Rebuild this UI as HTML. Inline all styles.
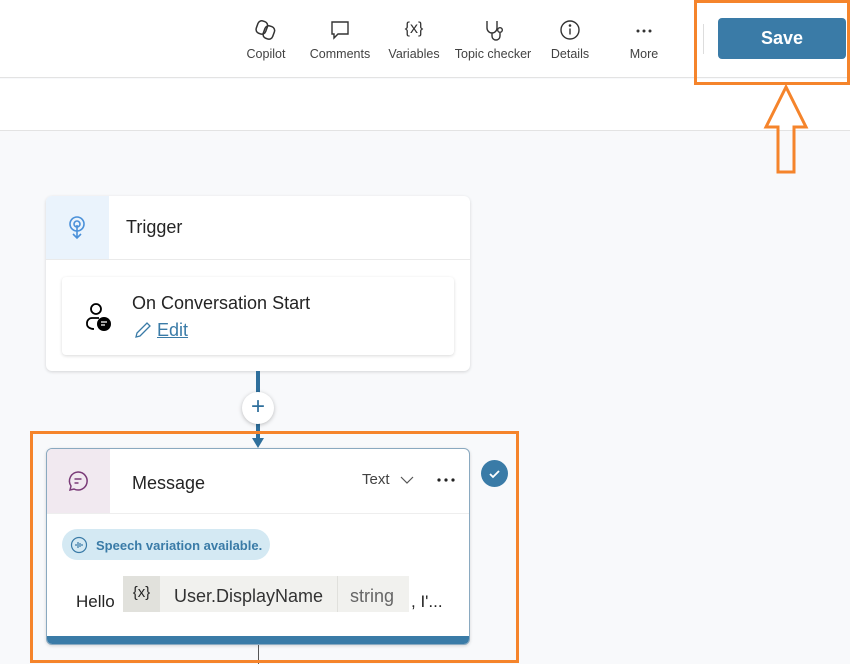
<!DOCTYPE html>
<html><head><style>
*{margin:0;padding:0;box-sizing:border-box}
body{width:850px;height:664px;overflow:hidden;background:#f8f9fb;font-family:"Liberation Sans",sans-serif;position:relative;color:#242424}
.abs{position:absolute}
.tb{left:0;top:0;width:850px;height:78px;background:#fff;border-bottom:1px solid #e3e3e3}
.band{left:0;top:79px;width:850px;height:52px;background:#fff;border-bottom:1px solid #e3e3e3}
.tool{top:18px;text-align:center;font-size:12.5px;color:#424242}
.tool svg{display:block;margin:0 auto 5px}
.card{background:#fff;border-radius:6px;box-shadow:0 1px 3px rgba(0,0,0,.15)}
</style></head><body>
<div class="abs tb"></div>
<div class="abs band"></div>

<div class="abs tool" style="left:240px;width:52px"><svg width="24" height="24" viewBox="0 0 24 24" fill="none" stroke="#333" stroke-width="1.5"><rect x="3" y="3" width="10" height="13" rx="4" transform="rotate(20 8 9)"/><rect x="10" y="8" width="10" height="13" rx="4" transform="rotate(20 15 14)"/></svg>Copilot</div>
<div class="abs tool" style="left:305px;width:70px"><svg width="24" height="24" viewBox="0 0 24 24" fill="none" stroke="#333" stroke-width="1.4"><path d="M4 4h16v12H10l-4 4v-4H4z"/></svg>Comments</div>
<div class="abs tool" style="left:385px;width:58px"><div style="font-size:16px;height:29px;line-height:22px;color:#333">{x}</div>Variables</div>
<div class="abs tool" style="left:450px;width:86px"><svg width="26" height="24" viewBox="0 0 26 24" fill="none" stroke="#333" stroke-width="1.4"><path d="M7 3v7a5 5 0 0 0 10 0V3M12 15v3a4 4 0 0 0 8 0v-3"/><circle cx="20" cy="12" r="2.3"/></svg>Topic checker</div>
<div class="abs tool" style="left:545px;width:50px"><svg width="24" height="24" viewBox="0 0 24 24" fill="none" stroke="#333" stroke-width="1.4"><circle cx="12" cy="12" r="9"/><path d="M12 10.5v6"/><circle cx="12" cy="7.5" r=".6" fill="#333"/></svg>Details</div>
<div class="abs tool" style="left:620px;width:48px"><div style="height:29px;padding-top:10px"><svg width="20" height="6" viewBox="0 0 20 6" style="margin:0 auto"><circle cx="4" cy="3" r="1.5" fill="#333"/><circle cx="10" cy="3" r="1.5" fill="#333"/><circle cx="16" cy="3" r="1.5" fill="#333"/></svg></div>More</div>
<div class="abs" style="left:703px;top:24px;width:1px;height:30px;background:#ddd"></div>

<div class="abs" style="left:718px;top:18px;width:128px;height:41px;background:#3a7ba7;border-radius:4px;color:#fff;font-weight:bold;font-size:18px;text-align:center;line-height:41px">Save</div>
<div class="abs" style="left:694px;top:0;width:156px;height:85px;border:3px solid #f5842b"></div>
<svg class="abs" style="left:760px;top:84px" width="52" height="92" viewBox="0 0 52 92"><path d="M26 3L6 43h12v45h16V43h12z" fill="none" stroke="#f5842b" stroke-width="3"/></svg>

<div class="abs card" style="left:46px;top:196px;width:424px;height:175px"></div>
<div class="abs" style="left:46px;top:196px;width:63px;height:63px;background:#eaf3fc;border-radius:6px 0 0 0"></div>
<svg class="abs" style="left:66px;top:215px" width="22" height="26" viewBox="0 0 22 26" fill="none" stroke="#4a90d9" stroke-width="1.6"><circle cx="11" cy="9" r="7"/><circle cx="11" cy="9" r="3"/><path d="M11 10v13M7 19l4 4 4-4"/></svg>
<div class="abs" style="left:46px;top:259px;width:424px;height:1px;background:#eaeaea"></div>
<div class="abs" style="left:126px;top:217px;font-size:18px">Trigger</div>
<div class="abs card" style="left:62px;top:277px;width:392px;height:78px;border-radius:4px"></div>
<svg class="abs" style="left:84px;top:301px" width="30" height="32" viewBox="0 0 30 32"><circle cx="12" cy="8" r="5" fill="none" stroke="#000" stroke-width="1.8"/><path d="M15 17H8a5 5 0 0 0-5 5v1c0 3 3 5 7 5" fill="none" stroke="#000" stroke-width="1.8"/><circle cx="20" cy="23" r="7" fill="#000"/><path d="M17 21h6M17 24h4" stroke="#fff" stroke-width="1.3"/></svg>
<div class="abs" style="left:132px;top:293px;font-size:18px">On Conversation Start</div>
<svg class="abs" style="left:133px;top:320px" width="20" height="20" viewBox="0 0 20 20" fill="none" stroke="#3a7ba7" stroke-width="1.3"><path d="M3 17l1-4L14 3l3 3L7 16z"/></svg>
<div class="abs" style="left:157px;top:320px;font-size:18px;color:#3a7ba7;text-decoration:underline">Edit</div>

<div class="abs" style="left:256px;top:371px;width:4px;height:72px;background:#2f6f9c"></div>
<div class="abs" style="left:242px;top:392px;width:32px;height:32px;border-radius:50%;background:#fff;box-shadow:0 1px 4px rgba(0,0,0,.25);text-align:center;line-height:30px;font-size:24px;color:#2f6f9c">+</div>
<svg class="abs" style="left:250px;top:436px" width="16" height="14"><path d="M2 2h12L8 12z" fill="#2f6f9c"/></svg>

<div class="abs card" style="left:46px;top:448px;width:424px;height:197px;border:1px solid #8aa9c0;overflow:hidden">
<div style="position:absolute;left:0;top:0;width:63px;height:64px;background:#f1e9f0"></div>
<div style="position:absolute;left:0;top:64px;width:424px;height:1px;background:#eee"></div>
<div style="position:absolute;left:0;bottom:0;width:424px;height:8px;background:#3a7ba7"></div>
</div>
<svg class="abs" style="left:66px;top:469px" width="24" height="24" viewBox="0 0 24 24" fill="none" stroke="#7a3b78" stroke-width="1.5"><path d="M12 3a9 9 0 1 1-4 17l-4 1 1-4A9 9 0 0 1 12 3z"/><path d="M8.5 10h7M8.5 14h4"/></svg>
<div class="abs" style="left:132px;top:473px;font-size:18px">Message</div>
<div class="abs" style="left:362px;top:471px;font-size:15px;color:#424242">Text</div>
<svg class="abs" style="left:399px;top:474px" width="16" height="12"><path d="M2 3l6 6 6-6" fill="none" stroke="#555" stroke-width="1.2"/></svg>
<svg class="abs" style="left:436px;top:477px" width="20" height="6" viewBox="0 0 20 6"><circle cx="3" cy="3" r="1.6" fill="#222"/><circle cx="10" cy="3" r="1.6" fill="#222"/><circle cx="17" cy="3" r="1.6" fill="#222"/></svg>
<div class="abs" style="left:481px;top:460px;width:27px;height:27px;border-radius:50%;background:#3a7ba7"></div>
<svg class="abs" style="left:487px;top:466px" width="15" height="15"><path d="M3 8l3 3 6-6" fill="none" stroke="#fff" stroke-width="1.8"/></svg>

<div class="abs" style="left:62px;top:529px;width:208px;height:31px;border-radius:16px;background:#d4e9f3"></div>
<svg class="abs" style="left:70px;top:536px" width="18" height="18" viewBox="0 0 18 18" fill="none" stroke="#3a7ba7" stroke-width="1.2"><circle cx="9" cy="9" r="7.5"/><path d="M6 8v2M8 6v6M10 7v4M12 8v2"/></svg>
<div class="abs" style="left:96px;top:538px;font-size:13px;font-weight:bold;color:#3a7ba7">Speech variation available.</div>

<div class="abs" style="left:76px;top:592px;font-size:17px">Hello</div>
<div class="abs" style="left:123px;top:576px;width:286px;height:36px;background:#f1f1ee"></div>
<div class="abs" style="left:123px;top:576px;width:37px;height:36px;background:#e1e1dc;text-align:center;font-size:15px;line-height:34px">{x}</div>
<div class="abs" style="left:337px;top:576px;width:1px;height:36px;background:#e0e0dc"></div>
<div class="abs" style="left:174px;top:586px;font-size:18px;color:#333">User.DisplayName</div>
<div class="abs" style="left:350px;top:586px;font-size:18px;color:#666">string</div>
<div class="abs" style="left:411px;top:592px;font-size:17px">, I'...</div>
<div class="abs" style="left:258px;top:645px;width:1px;height:19px;background:#555"></div>

<div class="abs" style="left:30px;top:431px;width:489px;height:232px;border:3px solid #f5842b"></div>
</body></html>
